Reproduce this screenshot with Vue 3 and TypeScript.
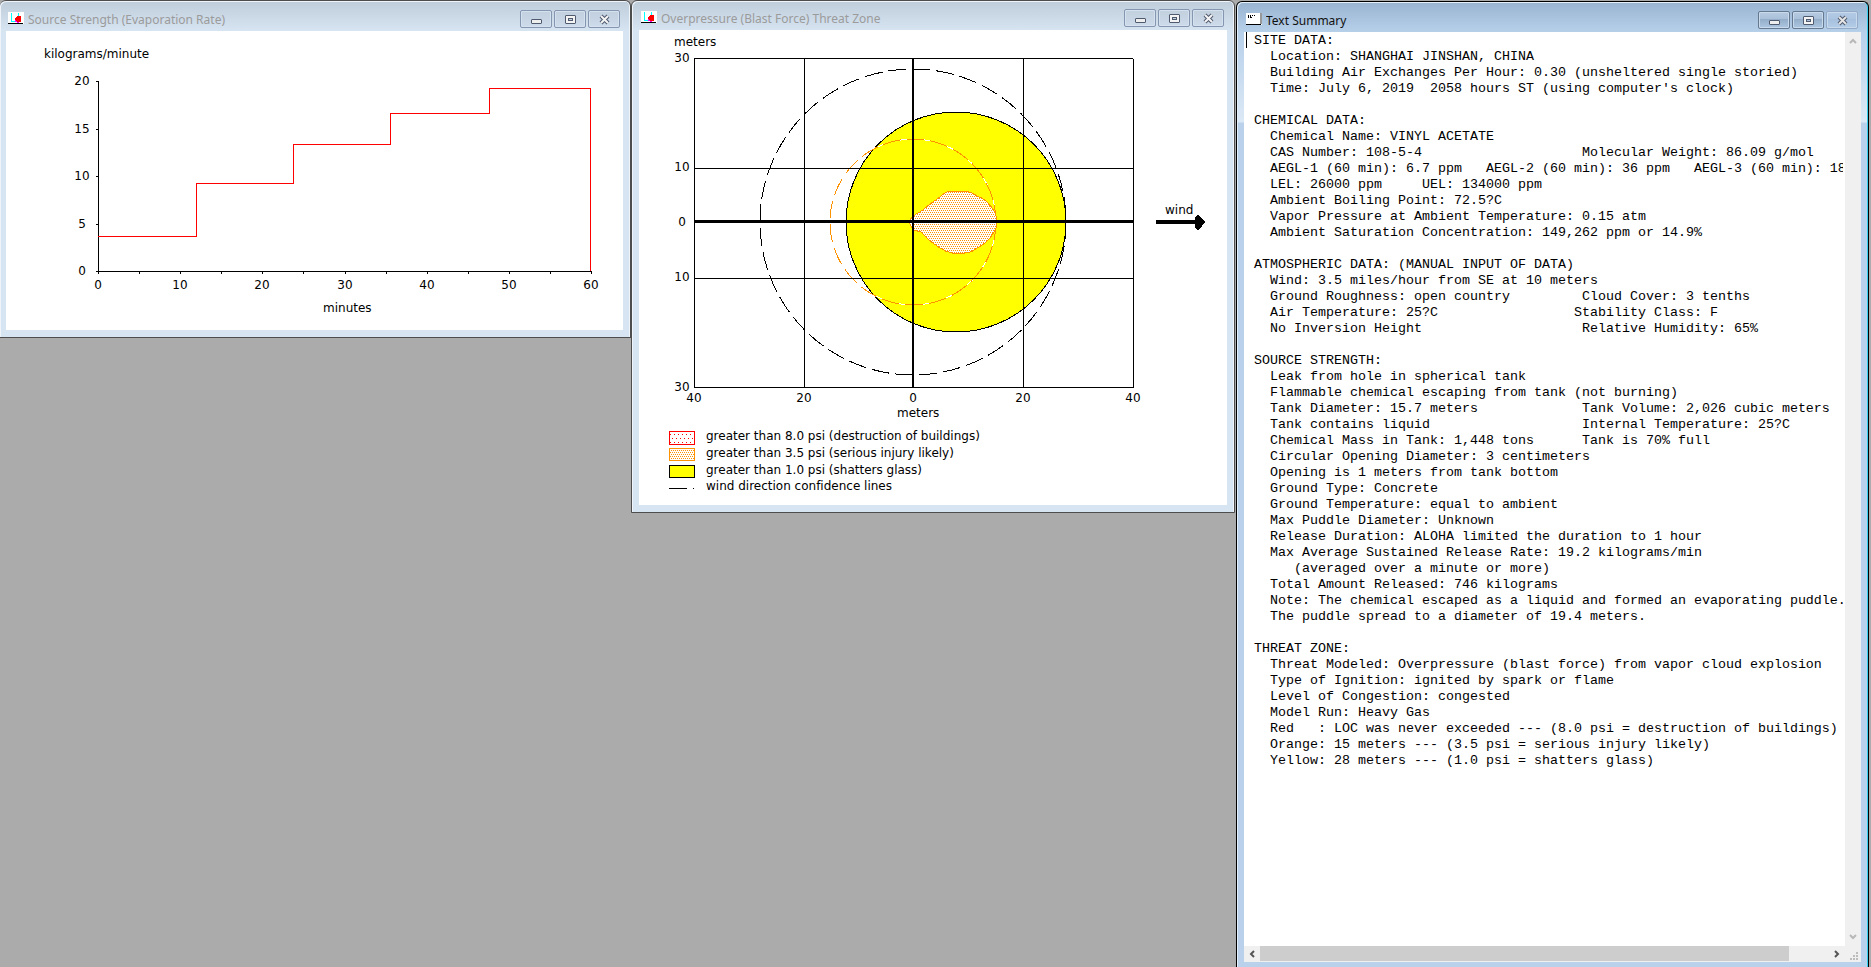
<script setup lang="ts">
interface Tick {
  at: number
  label: string
}

const rateTicks: Tick[] = [
  { at: 50, label: '20' },
  { at: 98, label: '15' },
  { at: 145, label: '10' },
  { at: 193, label: '5' },
  { at: 240, label: '0' },
]

const minuteTicks: Tick[] = Array.from({ length: 13 }, (_, i) => ({
  at: 92 + Math.round((i * 493) / 12),
  label: i % 2 === 0 ? String(i * 5) : '',
}))

const zoneRows: Tick[] = [
  { at: 32, label: '30' },
  { at: 141, label: '10' },
  { at: 196, label: '0' },
  { at: 251, label: '10' },
  { at: 361, label: '30' },
]

const zoneColumns: Tick[] = [
  { at: 55, label: '40' },
  { at: 165, label: '20' },
  { at: 274, label: '0' },
  { at: 384, label: '20' },
  { at: 494, label: '40' },
]

const legend: Tick[] = [
  { at: 410, label: 'greater than 8.0 psi (destruction of buildings)' },
  { at: 427, label: 'greater than 3.5 psi (serious injury likely)' },
  { at: 444, label: 'greater than 1.0 psi (shatters glass)' },
  { at: 460, label: 'wind direction confidence lines' },
]

const controls = ['Minimize', 'Maximize', 'Close']

// Places the second entry of a line at a fixed character column.
const pair = (left: string, right: string, column = 41): string => left.padEnd(column) + right

const summary = [
  'SITE DATA:',
  '  Location: SHANGHAI JINSHAN, CHINA',
  '  Building Air Exchanges Per Hour: 0.30 (unsheltered single storied)',
  "  Time: July 6, 2019  2058 hours ST (using computer's clock)",
  '',
  'CHEMICAL DATA:',
  '  Chemical Name: VINYL ACETATE',
  pair('  CAS Number: 108-5-4', 'Molecular Weight: 86.09 g/mol'),
  '  AEGL-1 (60 min): 6.7 ppm   AEGL-2 (60 min): 36 ppm   AEGL-3 (60 min): 180 ppm',
  '  LEL: 26000 ppm     UEL: 134000 ppm',
  '  Ambient Boiling Point: 72.5?C',
  '  Vapor Pressure at Ambient Temperature: 0.15 atm',
  '  Ambient Saturation Concentration: 149,262 ppm or 14.9%',
  '',
  'ATMOSPHERIC DATA: (MANUAL INPUT OF DATA)',
  '  Wind: 3.5 miles/hour from SE at 10 meters',
  pair('  Ground Roughness: open country', 'Cloud Cover: 3 tenths'),
  pair('  Air Temperature: 25?C', 'Stability Class: F', 40),
  pair('  No Inversion Height', 'Relative Humidity: 65%'),
  '',
  'SOURCE STRENGTH:',
  '  Leak from hole in spherical tank',
  '  Flammable chemical escaping from tank (not burning)',
  pair('  Tank Diameter: 15.7 meters', 'Tank Volume: 2,026 cubic meters'),
  pair('  Tank contains liquid', 'Internal Temperature: 25?C'),
  pair('  Chemical Mass in Tank: 1,448 tons', 'Tank is 70% full'),
  '  Circular Opening Diameter: 3 centimeters',
  '  Opening is 1 meters from tank bottom',
  '  Ground Type: Concrete',
  '  Ground Temperature: equal to ambient',
  '  Max Puddle Diameter: Unknown',
  '  Release Duration: ALOHA limited the duration to 1 hour',
  '  Max Average Sustained Release Rate: 19.2 kilograms/min',
  '     (averaged over a minute or more)',
  '  Total Amount Released: 746 kilograms',
  '  Note: The chemical escaped as a liquid and formed an evaporating puddle.',
  '  The puddle spread to a diameter of 19.4 meters.',
  '',
  'THREAT ZONE:',
  '  Threat Modeled: Overpressure (blast force) from vapor cloud explosion',
  '  Type of Ignition: ignited by spark or flame',
  '  Level of Congestion: congested',
  '  Model Run: Heavy Gas',
  '  Red   : LOC was never exceeded --- (8.0 psi = destruction of buildings)',
  '  Orange: 15 meters --- (3.5 psi = serious injury likely)',
  '  Yellow: 28 meters --- (1.0 psi = shatters glass)',
].join('\n')
</script>

<template>
  <main class="desktop">
    <section class="window source" aria-labelledby="source-title">
      <header class="titlebar">
        <svg class="app-icon" viewBox="0 0 16 12" aria-hidden="true">
          <rect width="16" height="12" fill="#fff" />
          <path d="M3 1h1v8h4v1H3zM10 1h1v4h-1z" fill="#0ff" />
          <path d="M9 4h2v7H9zM7 8h3v2H7z" fill="#f0f" />
          <path d="M9 4h3l1 1v4l-1 1H9L8 9l-1-1V6l1-1z" fill="#f00" />
          <rect y="11" width="15" height="1" />
        </svg>
        <h2 id="source-title">Source Strength (Evaporation Rate)</h2>
        <div class="controls">
          <button v-for="name in controls" :key="name" type="button" :aria-label="name">
            <svg viewBox="0 0 11 9" aria-hidden="true">
              <path v-if="name === 'Minimize'" d="M1 4h9l1 1v3l-1 1H1L0 8V5z" fill="#505a6e" />
              <path v-if="name === 'Minimize'" d="M1 5h9v3H1z" fill="#eee" />
              <path v-if="name === 'Maximize'" d="M1 0h9l1 1v7l-1 1H1L0 8V1z" fill="#505a6e" />
              <path v-if="name === 'Maximize'" d="M1 1h9v7H1zM3 3v3h5V3z" fill="#f4f4f4" fill-rule="evenodd" />
              <path v-if="name === 'Maximize'" d="M4 4h3v1H4z" fill="#c3d1e0" />
              <path v-if="name === 'Close'" d="M2 1l7 7M9 1L2 8" stroke="#505a6e" stroke-width="4" />
              <path v-if="name === 'Close'" d="M2 1l7 7M9 1L2 8" stroke="#f4f4f4" stroke-width="2" />
            </svg>
          </button>
        </div>
      </header>
      <svg class="chart" viewBox="0 0 617 299" role="img" aria-label="Evaporation rate by minute">
        <text x="38" y="27">kilograms/minute</text>
        <path class="ink" d="M92 50h1v191h-1zM92 240h494v1H92z" />
        <g v-for="tick in rateTicks" :key="tick.label">
          <rect x="90" :y="tick.at" width="2" height="1" />
          <text class="mid" x="76" :y="tick.at + 4">{{ tick.label }}</text>
        </g>
        <g v-for="tick in minuteTicks" :key="tick.at">
          <rect :x="tick.at" y="241" width="1" height="2" />
          <text class="mid" :x="tick.at" y="258">{{ tick.label }}</text>
        </g>
        <path
          class="rate"
          d="M91 205H190V152H287V113H384V82H483V57H584V239"
          transform="translate(0.5 0.5)"
        />
        <text x="317" y="281">minutes</text>
      </svg>
    </section>

    <section class="window threat" aria-labelledby="threat-title">
      <header class="titlebar">
        <svg class="app-icon" viewBox="0 0 16 12" aria-hidden="true">
          <rect width="16" height="12" fill="#fff" />
          <path d="M3 1h1v8h4v1H3zM10 1h1v4h-1z" fill="#0ff" />
          <path d="M9 4h2v7H9zM7 8h3v2H7z" fill="#f0f" />
          <path d="M9 4h3l1 1v4l-1 1H9L8 9l-1-1V6l1-1z" fill="#f00" />
          <rect y="11" width="15" height="1" />
        </svg>
        <h2 id="threat-title">Overpressure (Blast Force) Threat Zone</h2>
        <div class="controls">
          <button v-for="name in controls" :key="name" type="button" :aria-label="name">
            <svg viewBox="0 0 11 9" aria-hidden="true">
              <path v-if="name === 'Minimize'" d="M1 4h9l1 1v3l-1 1H1L0 8V5z" fill="#505a6e" />
              <path v-if="name === 'Minimize'" d="M1 5h9v3H1z" fill="#eee" />
              <path v-if="name === 'Maximize'" d="M1 0h9l1 1v7l-1 1H1L0 8V1z" fill="#505a6e" />
              <path v-if="name === 'Maximize'" d="M1 1h9v7H1zM3 3v3h5V3z" fill="#f4f4f4" fill-rule="evenodd" />
              <path v-if="name === 'Maximize'" d="M4 4h3v1H4z" fill="#c3d1e0" />
              <path v-if="name === 'Close'" d="M2 1l7 7M9 1L2 8" stroke="#505a6e" stroke-width="4" />
              <path v-if="name === 'Close'" d="M2 1l7 7M9 1L2 8" stroke="#f4f4f4" stroke-width="2" />
            </svg>
          </button>
        </div>
      </header>
      <svg class="chart" viewBox="0 0 588 475" role="img" aria-label="Overpressure threat zone map">
        <defs>
          <pattern id="orange-dots" width="2" height="4" patternUnits="userSpaceOnUse">
            <rect width="2" height="4" fill="#fff" />
            <rect width="1" height="1" fill="#ff9200" />
            <rect x="1" y="2" width="1" height="1" fill="#ff9200" />
          </pattern>
          <pattern id="red-dots" width="4" height="8" patternUnits="userSpaceOnUse">
            <rect width="4" height="8" fill="#fff" />
            <rect x="1" width="1" height="1" fill="#f00" />
            <rect x="3" y="4" width="1" height="1" fill="#f00" />
          </pattern>
        </defs>

        <text x="35" y="16">meters</text>
        <circle class="line" cx="317" cy="192" r="110" fill="#ff0" />
        <circle class="gap" cx="274" cy="192" r="83" />
        <circle class="dash orange" cx="274" cy="192" r="83" />
        <circle class="dash" cx="274" cy="192" r="153" />
        <path
          class="zone"
          d="M270 192L272 188L274 186L284 180L291 174L301 167Q307 161 313 161H326Q333 162 338 166Q344 168 348 172Q353 177 355 181Q358 186 358 192Q358 197 356 200Q354 204 351 208L346 213Q342 216 338 218Q332 223 326 223H313Q307 222 301 218L291 211L282 202L275 200L272 196Z"
        />

        <g class="ink">
          <path d="M55 28h439v1H55zM55 138h440v1H55zM55 248h440v1H55zM55 357h440v1H55z" />
          <path d="M55 28h1v330h-1zM165 28h1v330h-1zM384 28h1v330h-1zM494 29h1v329h-1z" />
          <path d="M273 28h2v330h-2zM55 190h440v3H55z" />
        </g>

        <text v-for="row in zoneRows" :key="row.at" class="mid" x="43" :y="row.at">{{ row.label }}</text>
        <text v-for="column in zoneColumns" :key="column.at" class="mid" :x="column.at" y="372">
          {{ column.label }}
        </text>
        <text x="258" y="387">meters</text>

        <text x="526" y="184">wind</text>
        <path class="ink" d="M517 190h39v-3l3-2h1l6 7l-6 8h-1l-3-2v-4h-39z" />

        <g class="ink">
          <rect x="30" y="401" width="26" height="14" fill="#f00" />
          <rect x="31" y="402" width="24" height="12" fill="url(#red-dots)" />
          <rect x="30" y="418" width="26" height="13" fill="#ff9200" />
          <rect x="31" y="419" width="24" height="11" fill="url(#orange-dots)" />
          <rect x="30" y="435" width="26" height="13" />
          <rect x="31" y="436" width="24" height="11" fill="#ff0" />
          <path d="M30 458h18v1H30zM54 458h1v1h-1z" />
        </g>
        <text v-for="entry in legend" :key="entry.at" x="67" :y="entry.at">{{ entry.label }}</text>
      </svg>
    </section>

    <section class="window summary active" aria-labelledby="summary-title">
      <header class="titlebar">
        <svg class="app-icon" viewBox="0 0 16 12" aria-hidden="true">
          <rect width="16" height="12" fill="#fff" />
          <path d="M2 2h1v3H2zM4 2h1v3H4zM6 2h1v1H6zM8 2h1v1H8zM5 4h1v1H5z" />
          <rect x="14" y="0" width="2" height="11" fill="#999" />
          <rect y="11" width="15" height="1" />
        </svg>
        <h2 id="summary-title">Text Summary</h2>
        <div class="controls">
          <button v-for="name in controls" :key="name" type="button" :aria-label="name">
            <svg viewBox="0 0 11 9" aria-hidden="true">
              <path v-if="name === 'Minimize'" d="M1 4h9l1 1v3l-1 1H1L0 8V5z" fill="#505a6e" />
              <path v-if="name === 'Minimize'" d="M1 5h9v3H1z" fill="#eee" />
              <path v-if="name === 'Maximize'" d="M1 0h9l1 1v7l-1 1H1L0 8V1z" fill="#505a6e" />
              <path v-if="name === 'Maximize'" d="M1 1h9v7H1zM3 3v3h5V3z" fill="#f4f4f4" fill-rule="evenodd" />
              <path v-if="name === 'Maximize'" d="M4 4h3v1H4z" fill="#a9c0d8" />
              <path v-if="name === 'Close'" d="M2 1l7 7M9 1L2 8" stroke="#505a6e" stroke-width="4" />
              <path v-if="name === 'Close'" d="M2 1l7 7M9 1L2 8" stroke="#e4e4e4" stroke-width="2" />
            </svg>
          </button>
        </div>
      </header>
      <div class="editor">
        <textarea aria-label="Text Summary" :value="summary" readonly spellcheck="false" wrap="off"></textarea>
        <span class="caret"></span>
        <div class="vertical">
          <button type="button" aria-label="Scroll up">
            <svg viewBox="0 0 8 6" aria-hidden="true"><path d="M1 5l3-3l3 3" /></svg>
          </button>
          <button type="button" aria-label="Scroll down">
            <svg viewBox="0 0 8 6" aria-hidden="true"><path d="M1 1l3 3l3-3" /></svg>
          </button>
        </div>
        <div class="horizontal">
          <button type="button" aria-label="Scroll left">
            <svg viewBox="0 0 6 8" aria-hidden="true"><path d="M5 1L2 4l3 3" /></svg>
          </button>
          <div class="track"><div class="thumb"></div></div>
          <button type="button" aria-label="Scroll right">
            <svg viewBox="0 0 6 8" aria-hidden="true"><path d="M1 1l3 3l-3 3" /></svg>
          </button>
        </div>
        <svg class="grip" viewBox="0 0 16 16" aria-hidden="true">
          <path d="M11 6h2v2h-2zM8 9h2v2H8zM11 9h2v2h-2zM5 12h2v2H5zM8 12h2v2H8zM11 12h2v2h-2z" />
        </svg>
      </div>
    </section>
  </main>
</template>

<style>
body {
  margin: 0;
  background: #ababab;
}
</style>

<style scoped>
.desktop {
  display: grid;
  grid-template-columns: 631fr 605fr 635fr;
  align-items: start;
  min-height: 100vh;
  background: #ababab;
  font-family: 'Noto Sans', sans-serif;
  overflow: hidden;
}

.window {
  box-sizing: border-box;
  min-width: 0;
  padding: 0 7px 7px;
  border: 1px solid #4d4d4d;
  border-radius: 6px 6px 0 0;
  background: linear-gradient(#bfcddb, #d7e4f2 30px);
  box-shadow: inset 1px 1px 0 #eef4fa, inset -1px 0 0 #eef4fa;
}

.source {
  padding-left: 6px;
  border-left: 0;
}

.threat {
  margin-right: 1px;
}

.summary {
  display: flex;
  flex-direction: column;
  height: calc(100vh - 1px);
  margin: 1px 2px 0 0;
  padding-bottom: 5px;
  border-color: #000;
  border-bottom: 0;
  background: linear-gradient(#99b4d1, #b7d0ea 30px, #dce9f6 120px, #b9d1ea 121px);
  box-shadow: inset 1px 1px 0 #e6f0fa, inset -1px 0 0 #35d0ee;
}

.titlebar {
  display: flex;
  flex: none;
  align-items: flex-end;
  box-sizing: border-box;
  height: 30px;
  padding: 0 3px 3px 2px;
}

.threat .titlebar {
  height: 29px;
}

.app-icon {
  flex: none;
  width: 16px;
  height: 12px;
  margin: 0 4px 4px 0;
  shape-rendering: crispEdges;
}

h2 {
  flex: 1;
  min-width: 0;
  margin: 0;
  overflow: hidden;
  color: #9b9b9b;
  font-size: 12px;
  font-weight: 400;
  line-height: 16px;
  white-space: nowrap;
}

.active h2 {
  color: #111;
}

.controls {
  display: flex;
  flex: none;
  gap: 2px;
}

button {
  display: flex;
  align-items: center;
  justify-content: center;
  box-sizing: border-box;
  margin: 0;
  padding: 0;
  border: 0;
  background: none;
}

.controls button {
  width: 32px;
  height: 18px;
  border: 1px solid #8596b0;
  border-radius: 2px;
  background: linear-gradient(#c3d0de, #c6d4e3 50%, #cddbea);
  box-shadow: inset 0 0 0 1px #d5e1ee;
}

.controls svg {
  width: 11px;
  height: 9px;
  overflow: visible;
}

.active .controls button {
  border-color: #64788f;
  background: linear-gradient(#b7cbe1, #a9c0d9 45%, #94aeca 46%, #adc6e0);
  box-shadow: inset 0 0 0 1px #c9daec;
}

.active .controls button:last-child {
  border-color: #93abc8;
  background: linear-gradient(#b4cbe5, #abc4e0 45%, #a6c0dd 46%, #b4cde8);
}

.chart {
  display: block;
  width: 100%;
  height: auto;
  background: #fff;
  shape-rendering: crispEdges;
}

.chart text {
  font-family: 'DejaVu Sans', sans-serif;
  font-size: 12px;
  font-variant-ligatures: none;
}

.chart .mid {
  text-anchor: middle;
}

.rate {
  fill: none;
  stroke: #f00;
}

.line {
  stroke: #000;
}

.gap {
  fill: none;
  stroke: #fff;
}

.dash {
  fill: none;
  stroke: #000;
  stroke-dasharray: 18 6;
}

.orange {
  stroke: #ff9200;
}

.zone {
  fill: url(#orange-dots);
  stroke: #ff9200;
}

.editor {
  display: grid;
  flex: 1;
  position: relative;
  grid-template-rows: 1fr 16px;
  grid-template-columns: 1fr 16px;
  min-height: 0;
  background: #f0f0f0;
}

textarea {
  display: block;
  box-sizing: border-box;
  width: 100%;
  height: 100%;
  margin: 0;
  padding: 1px 0 0 10px;
  border: 0;
  border-right: 2px solid #fff;
  outline: 0;
  overflow: hidden;
  background: #fff;
  color: #000;
  font: 10pt/16px 'Liberation Mono', monospace;
  white-space: pre;
  resize: none;
}

.caret {
  position: absolute;
  top: 0;
  left: 2px;
  width: 1px;
  height: 16px;
  background: #000;
}

.vertical {
  display: flex;
  flex-direction: column;
  justify-content: space-between;
}

.vertical button {
  width: 16px;
  height: 18px;
}

.vertical svg {
  width: 8px;
  height: 6px;
}

.horizontal {
  display: flex;
}

.horizontal button {
  flex: none;
  width: 16px;
  height: 15px;
}

.horizontal svg {
  width: 6px;
  height: 8px;
}

.editor path {
  fill: none;
  stroke: #b8b8b8;
  stroke-width: 2;
}

.editor .horizontal path {
  stroke: #555;
}

.track {
  flex: 1;
}

.thumb {
  width: 93%;
  height: 15px;
  background: #cdcdcd;
}

.grip {
  width: 16px;
  height: 16px;
}

.editor .grip path {
  fill: #bdbdbd;
  stroke: none;
}
</style>
